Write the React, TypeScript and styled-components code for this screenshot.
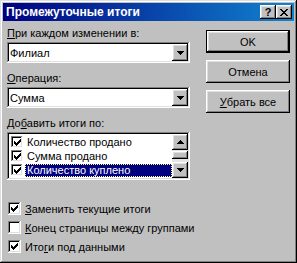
import styled, { createGlobalStyle } from "styled-components";

const GlobalStyle = createGlobalStyle`
  html, body { margin: 0; padding: 0; background: #c0c0c0; }
  body {
    font-family: "Liberation Sans", Arial, sans-serif;
    font-size: 11px;
    color: #000;
  }
`;

const raised = `
  box-shadow: inset -1px -1px #000, inset 1px 1px #fff,
    inset -2px -2px #808080, inset 2px 2px #dfdfdf;
`;

const sunken = `
  box-shadow: inset -1px -1px #fff, inset 1px 1px #808080,
    inset -2px -2px #dfdfdf, inset 2px 2px #000;
`;

const Window = styled.div`
  width: 297px;
  height: 263px;
  box-sizing: border-box;
  padding: 3px;
  background: #c0c0c0;
  box-shadow: inset -1px -1px #000, inset 1px 1px #dfdfdf,
    inset -2px -2px #808080, inset 2px 2px #fff;
  display: flex;
  flex-direction: column;
`;

const TitleBar = styled.div`
  height: 18px;
  display: flex;
  align-items: center;
  padding: 0 2px 0 3px;
  background: linear-gradient(90deg, #000080, #1084d0);
`;

const Title = styled.div`
  flex: 1;
  color: #fff;
  font-weight: bold;
  font-size: 12px;
`;

const TitleButton = styled.div`
  width: 16px;
  height: 14px;
  background: #c0c0c0;
  ${raised}
  display: flex;
  align-items: center;
  justify-content: center;
  font-weight: bold;
  font-size: 11px;
  line-height: 14px;
`;

const Body = styled.div`
  flex: 1;
  padding: 6px 4px 0 4px;
  display: flex;
  flex-direction: column;
`;

const Top = styled.div`
  display: flex;
  gap: 16px;
`;

const LeftCol = styled.div`
  width: 183px;
  display: flex;
  flex-direction: column;
`;

const Label = styled.div<{ $gap?: number }>`
  height: 13px;
  line-height: 13px;
  margin-top: ${(p) => p.$gap ?? 0}px;
  margin-bottom: 2px;
  white-space: nowrap;
`;

const Combo = styled.div`
  height: 21px;
  box-sizing: border-box;
  padding: 2px;
  background: #fff;
  ${sunken}
  display: flex;
  align-items: center;
`;

const ComboText = styled.div`
  flex: 1;
  padding-left: 1px;
`;

const DropButton = styled.div`
  width: 16px;
  height: 17px;
  background: #c0c0c0;
  ${raised}
  display: flex;
  align-items: center;
  justify-content: center;
`;

const ListBox = styled.div`
  height: 48px;
  box-sizing: border-box;
  padding: 2px;
  background: #fff;
  ${sunken}
  display: flex;
`;

const Items = styled.div`
  flex: 1;
  padding-top: 1px;
  display: flex;
  flex-direction: column;
`;

const Row = styled.div`
  height: 14px;
  display: flex;
  align-items: center;
  padding-left: 2px;
`;

const ItemText = styled.div<{ $selected?: boolean }>`
  flex: 1;
  height: 13px;
  line-height: 13px;
  margin-left: 2px;
  padding-left: 2px;
  white-space: nowrap;
  background: ${(p) => (p.$selected ? "#000080" : "transparent")};
  color: ${(p) => (p.$selected ? "#fff" : "#000")};
  outline: ${(p) => (p.$selected ? "1px dotted #ffff80" : "none")};
  outline-offset: -1px;
`;

const ScrollBar = styled.div`
  width: 16px;
  display: flex;
  flex-direction: column;
`;

const ScrollButton = styled.div`
  width: 16px;
  height: 16px;
  background: #c0c0c0;
  ${raised}
  display: flex;
  align-items: center;
  justify-content: center;
`;

const Track = styled.div`
  flex: 1;
  background: #e4e4e4;
  padding-top: 1px;
`;

const Thumb = styled.div`
  height: 8px;
  background: #c0c0c0;
  ${raised}
`;

const RightCol = styled.div`
  width: 84px;
  padding-top: 3px;
  display: flex;
  flex-direction: column;
  gap: 7px;
`;

const Button = styled.div<{ $default?: boolean }>`
  height: 23px;
  box-sizing: border-box;
  background: #c0c0c0;
  display: flex;
  align-items: center;
  justify-content: center;
  ${(p) =>
    p.$default
      ? `box-shadow: inset 0 0 0 1px #000, inset -2px -2px #000, inset 2px 2px #fff,
    inset -3px -3px #808080, inset 3px 3px #dfdfdf;`
      : raised}
`;

const Options = styled.div`
  margin-top: 22px;
  display: flex;
  flex-direction: column;
  gap: 6px;
  padding-left: 1px;
`;

const Option = styled.div`
  height: 13px;
  display: flex;
  align-items: center;
  gap: 4px;
  white-space: nowrap;
`;

const Box = styled.div<{ $size?: number }>`
  width: ${(p) => p.$size ?? 13}px;
  height: ${(p) => p.$size ?? 13}px;
  flex: none;
  box-sizing: border-box;
  background: #fff;
  ${sunken}
  display: flex;
  align-items: center;
  justify-content: center;
`;

const U = styled.span`
  text-decoration: underline;
  text-underline-offset: 1px;
`;

const checkPixels: [number, number][] = [
  [6, 0],
  [5, 1], [6, 1],
  [0, 2], [4, 2], [5, 2], [6, 2],
  [0, 3], [1, 3], [3, 3], [4, 3], [5, 3],
  [0, 4], [1, 4], [2, 4], [3, 4], [4, 4],
  [1, 5], [2, 5], [3, 5],
  [2, 6],
];

const Check = () => (
  <svg width="7" height="7" viewBox="0 0 7 7" shapeRendering="crispEdges">
    {checkPixels.map(([x, y]) => (
      <rect key={`${x}-${y}`} x={x} y={y} width="1" height="1" fill="#000" />
    ))}
  </svg>
);

const CheckBox = ({ checked, size }: { checked?: boolean; size?: number }) => (
  <Box $size={size}>{checked && <Check />}</Box>
);

const closePixels: [number, number][] = [
  [0, 0], [1, 0], [6, 0], [7, 0],
  [1, 1], [2, 1], [5, 1], [6, 1],
  [2, 2], [3, 2], [4, 2], [5, 2],
  [3, 3], [4, 3],
  [2, 4], [3, 4], [4, 4], [5, 4],
  [1, 5], [2, 5], [5, 5], [6, 5],
  [0, 6], [1, 6], [6, 6], [7, 6],
];

const CloseGlyph = () => (
  <svg width="8" height="7" viewBox="0 0 8 7" shapeRendering="crispEdges">
    {closePixels.map(([x, y]) => (
      <rect key={`${x}-${y}`} x={x} y={y} width="1" height="1" fill="#000" />
    ))}
  </svg>
);

const Arrow = ({ up }: { up?: boolean }) => (
  <svg width="7" height="4" viewBox="0 0 7 4" shapeRendering="crispEdges">
    <path
      d={up ? "M3 0h1v1h1v1h1v1h1v1H0V3h1V2h1V1h1z" : "M0 0h7v1H6v1H5v1H4v1H3V3H2V2H1V1H0z"}
      fill="#000"
    />
  </svg>
);

const ComboBox = ({ value }: { value: string }) => (
  <Combo>
    <ComboText>{value}</ComboText>
    <DropButton>
      <Arrow />
    </DropButton>
  </Combo>
);

const items = ["Количество продано", "Сумма продано", "Количество куплено"];

export default function App() {
  return (
    <>
      <GlobalStyle />
      <Window>
        <TitleBar>
          <Title>Промежуточные итоги</Title>
          <TitleButton>?</TitleButton>
          <TitleButton>
            <CloseGlyph />
          </TitleButton>
        </TitleBar>
        <Body>
          <Top>
            <LeftCol>
              <Label>
                <U>П</U>ри каждом изменении в:
              </Label>
              <ComboBox value="Филиал" />
              <Label $gap={9}>
                <U>О</U>перация:
              </Label>
              <ComboBox value="Сумма" />
              <Label $gap={9}>
                До<U>б</U>авить итоги по:
              </Label>
              <ListBox>
                <Items>
                  {items.map((item, i) => (
                    <Row key={item}>
                      <CheckBox checked size={12} />
                      <ItemText $selected={i === 2}>{item}</ItemText>
                    </Row>
                  ))}
                </Items>
                <ScrollBar>
                  <ScrollButton>
                    <Arrow up />
                  </ScrollButton>
                  <Track>
                    <Thumb />
                  </Track>
                  <ScrollButton>
                    <Arrow />
                  </ScrollButton>
                </ScrollBar>
              </ListBox>
            </LeftCol>
            <RightCol>
              <Button $default>OK</Button>
              <Button>Отмена</Button>
              <Button>
                <U>У</U>брать все
              </Button>
            </RightCol>
          </Top>
          <Options>
            <Option>
              <CheckBox checked />
              <span>
                <U>З</U>аменить текущие итоги
              </span>
            </Option>
            <Option>
              <CheckBox />
              <span>
                <U>К</U>онец страницы между группами
              </span>
            </Option>
            <Option>
              <CheckBox checked />
              <span>
                Ито<U>г</U>и под данными
              </span>
            </Option>
          </Options>
        </Body>
      </Window>
    </>
  );
}
